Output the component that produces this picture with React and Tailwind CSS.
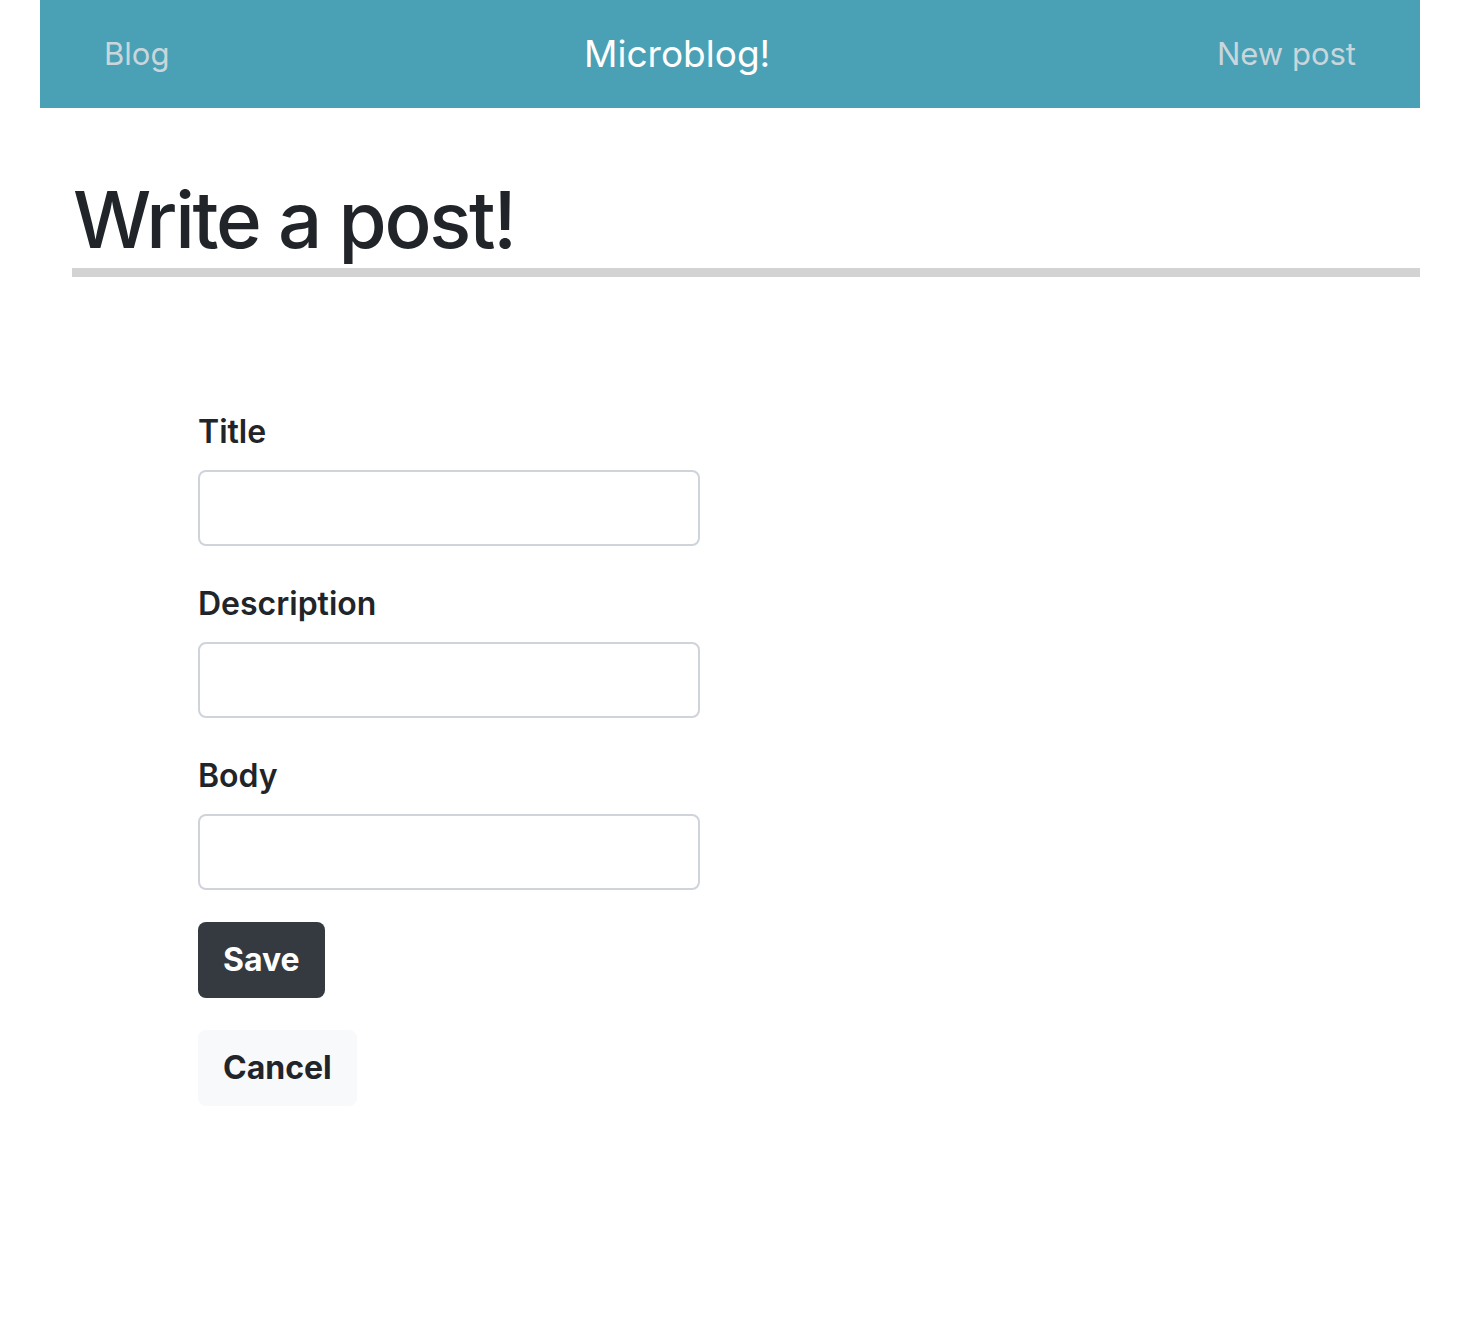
import React from 'react';

const Field = ({ label }) => (
  <div className="flex flex-col">
    <label className="text-[32px] font-semibold text-[#212529] leading-[48px] mb-[14px]">{label}</label>
    <input
      type="text"
      className="w-[502px] h-[76px] rounded-[8px] border-2 border-[#ced4da] bg-white px-4 text-[32px] outline-none"
    />
  </div>
);

const App = () => {
  return (
    <div className="min-h-[1340px] bg-white font-['Inter',sans-serif] text-[#212529]">
      <nav className="ml-[40px] mr-[56px] h-[108px] bg-[#4aa1b6] px-16 flex items-center justify-between">
        <a className="text-[31px] text-[#c9d6db]">Blog</a>
        <span className="text-[37px] text-white pr-8">Microblog!</span>
        <a className="text-[31px] text-[#c9d6db]">New post</a>
      </nav>

      <main className="ml-[72px] mr-[56px]">
        <h1 className="mt-[64px] pl-[1px] text-[78px] font-medium leading-[96px] tracking-[-2.3px] border-b-[9px] border-[#d3d3d3]">
          Write a post!
        </h1>

        <form className="ml-[126px] mt-[131px] flex flex-col gap-[34px]">
          <Field label="Title" />
          <Field label="Description" />
          <Field label="Body" />
          <div className="flex flex-col items-start gap-[32px] -mt-[2px]">
            <button type="button" className="h-[76px] px-[25px] rounded-[8px] bg-[#343a40] text-white text-[32px] font-bold">
              Save
            </button>
            <button type="button" className="h-[76px] px-[25px] rounded-[8px] bg-[#f8f9fa] text-[#212529] text-[32px] font-bold">
              Cancel
            </button>
          </div>
        </form>
      </main>
    </div>
  );
};

export default App;
